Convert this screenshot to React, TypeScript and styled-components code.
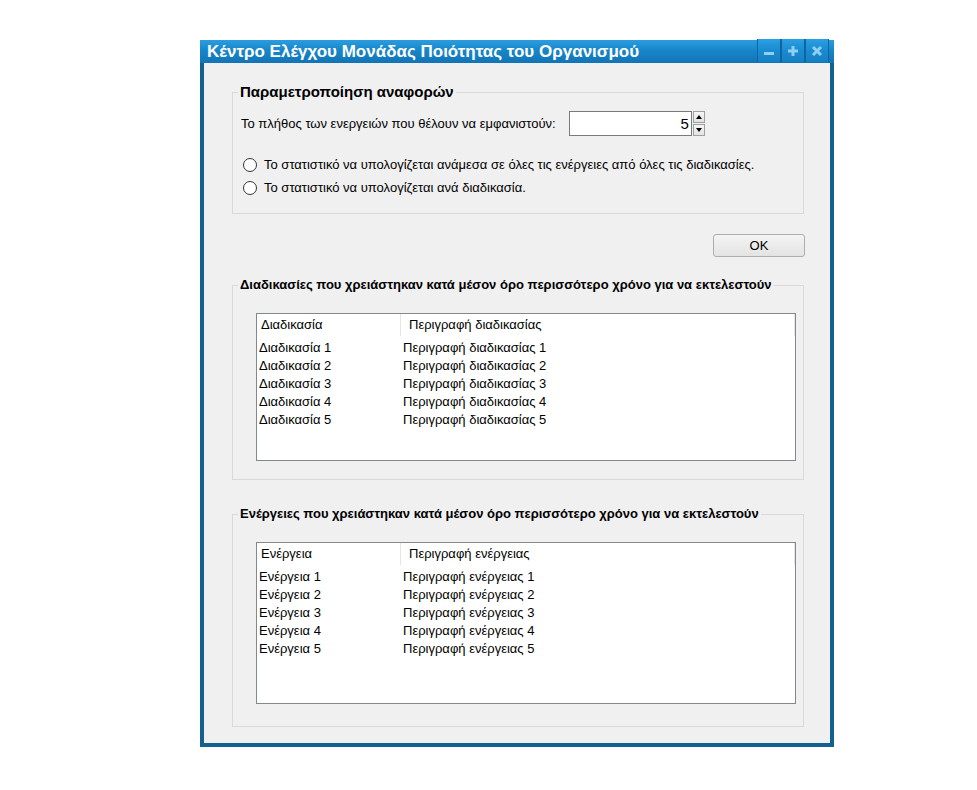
import React from "react";
import styled, { createGlobalStyle } from "styled-components";

const GlobalStyle = createGlobalStyle`
  html, body { margin: 0; padding: 0; background: #ffffff; }
  body { font-family: "Liberation Sans", Arial, sans-serif; font-size: 13px; color: #000; }
  * { box-sizing: border-box; }
`;

const Page = styled.div`
  padding: 40px 0 0 200px;
`;

const Window = styled.div`
  width: 634px;
  display: flex;
  flex-direction: column;
`;

const TitleBar = styled.div`
  height: 23px;
  display: flex;
  align-items: flex-start;
  padding-left: 7px;
  background: linear-gradient(#2a9de0 0%, #1786c9 45%, #1274b6 100%);
`;

const TitleText = styled.div`
  font-family: "Liberation Sans", Arial, sans-serif;
  font-weight: bold;
  font-size: 17px;
  line-height: 23px;
  color: #ffffff;
  flex: 1;
  white-space: nowrap;
`;

const WinButtons = styled.div`
  display: flex;
  gap: 2px;
  margin-right: 6px;
  margin-top: -1px;
`;

const WinButton = styled.div`
  width: 22px;
  height: 23px;
  display: flex;
  align-items: center;
  justify-content: center;
  background: linear-gradient(#2ba0e2 0%, #1a8bd0 50%, #1580c3 100%);
  box-shadow: -1px 0 0 #0f65a0, 1px 0 0 #0f65a0;
`;

const Client = styled.div`
  background: #f0f0f0;
  border: 4px solid #13618f;
  border-top: none;
  padding: 20px 26px 16px 28px;
  display: flex;
  flex-direction: column;
`;

const Group = styled.fieldset<{ $mt?: number; $pt: number; $pb: number }>`
  margin: ${(p) => p.$mt ?? 0}px 0 0 0;
  padding: ${(p) => p.$pt}px 7px ${(p) => p.$pb}px 8px;
  border: 1px solid #d9d9d9;
  min-width: 0;
`;

const Legend = styled.legend<{ $size: number }>`
  margin-left: -3px;
  padding: 0 2px;
  font-family: "Liberation Sans", Arial, sans-serif;
  font-weight: bold;
  font-size: ${(p) => p.$size}px;
  line-height: 18px;
  color: #000;
`;

const SpinRow = styled.div`
  display: flex;
  align-items: center;
  height: 25px;
  gap: 13px;
`;

const Label = styled.span`
  font-size: 13px;
  white-space: nowrap;
`;

const Spin = styled.div`
  display: flex;
  height: 25px;
  margin-left: auto;
  margin-right: 98px;
`;

const SpinInput = styled.div`
  width: 123px;
  height: 25px;
  background: #fff;
  border: 1px solid #7a7a7a;
  font-size: 15px;
  line-height: 23px;
  text-align: right;
  padding-right: 2px;
`;

const SpinButtons = styled.div`
  display: flex;
  flex-direction: column;
  gap: 1px;
  margin-left: 1px;
`;

const SpinBtn = styled.div`
  width: 12px;
  height: 12px;
  border: 1px solid #a0a0a0;
  background: linear-gradient(#f6f6f6, #e2e2e2);
  display: flex;
  align-items: center;
  justify-content: center;
`;

const RadioList = styled.div`
  margin-top: 17px;
  display: flex;
  flex-direction: column;
`;

const RadioRow = styled.label`
  display: flex;
  align-items: center;
  height: 23px;
  gap: 7px;
  padding-left: 2px;
  font-size: 13px;
  white-space: nowrap;
`;

const RadioDot = styled.span`
  width: 14px;
  height: 14px;
  border-radius: 50%;
  border: 1px solid #333;
  background: #fff;
  flex: none;
`;

const ButtonRow = styled.div`
  display: flex;
  justify-content: flex-end;
  margin: 20px -1px 0 0;
`;

const OkButton = styled.button`
  width: 92px;
  height: 23px;
  border: 1px solid #adadad;
  border-radius: 3px;
  background: linear-gradient(#f4f4f4, #e3e3e3);
  font-family: "Liberation Sans", Arial, sans-serif;
  font-size: 13px;
  color: #000;
  padding: 0;
`;

const ListBox = styled.div<{ $h: number }>`
  margin-left: 15px;
  height: ${(p) => p.$h}px;
  background: #fff;
  border: 1px solid #828790;
  display: grid;
  grid-template-columns: 144px 1fr;
  grid-auto-rows: 18px;
  grid-template-rows: 22px 3px;
  align-content: start;
`;

const HeadCell = styled.div<{ $first?: boolean }>`
  height: 22px;
  line-height: 22px;
  font-size: 13px;
  padding-left: ${(p) => (p.$first ? 4 : 8)}px;
  border-right: 1px solid #e5e5e5;
  white-space: nowrap;
`;

const Spacer = styled.div`
  grid-column: 1 / -1;
`;

const Cell = styled.div`
  font-size: 13px;
  line-height: 18px;
  padding-left: 2px;
  white-space: nowrap;
`;

const MinusIcon = () => (
  <svg width="12" height="12" viewBox="0 0 12 12">
    <rect x="1" y="7" width="10" height="3" fill="#8fd0f2" />
  </svg>
);
const PlusIcon = () => (
  <svg width="12" height="12" viewBox="0 0 12 12">
    <rect x="1" y="4.5" width="10" height="3" fill="#8fd0f2" />
    <rect x="4.5" y="1" width="3" height="10" fill="#8fd0f2" />
  </svg>
);
const CloseIcon = () => (
  <svg width="12" height="12" viewBox="0 0 12 12">
    <path d="M2 2 L10 10 M10 2 L2 10" stroke="#8fd0f2" strokeWidth="3" />
  </svg>
);

const ArrowUp = () => (
  <svg width="6" height="4" viewBox="0 0 6 4">
    <path d="M0 4 L3 0 L6 4 Z" fill="#000" />
  </svg>
);
const ArrowDown = () => (
  <svg width="6" height="4" viewBox="0 0 6 4">
    <path d="M0 0 L3 4 L6 0 Z" fill="#000" />
  </svg>
);

const processes = [1, 2, 3, 4, 5];

export default function App() {
  return (
    <>
      <GlobalStyle />
      <Page>
        <Window>
          <TitleBar>
            <TitleText>Κέντρο Ελέγχου Μονάδας Ποιότητας του Οργανισμού</TitleText>
            <WinButtons>
              <WinButton><MinusIcon /></WinButton>
              <WinButton><PlusIcon /></WinButton>
              <WinButton><CloseIcon /></WinButton>
            </WinButtons>
          </TitleBar>
          <Client>
            <Group $pt={10} $pb={14}>
              <Legend $size={15}>Παραμετροποίηση αναφορών</Legend>
              <SpinRow>
                <Label>Το πλήθος των ενεργειών που θέλουν να εμφανιστούν:</Label>
                <Spin>
                  <SpinInput>5</SpinInput>
                  <SpinButtons>
                    <SpinBtn><ArrowUp /></SpinBtn>
                    <SpinBtn><ArrowDown /></SpinBtn>
                  </SpinButtons>
                </Spin>
              </SpinRow>
              <RadioList>
                <RadioRow>
                  <RadioDot />
                  Το στατιστικό να υπολογίζεται ανάμεσα σε όλες τις ενέργειες από όλες τις διαδικασίες.
                </RadioRow>
                <RadioRow>
                  <RadioDot />
                  Το στατιστικό να υπολογίζεται ανά διαδικασία.
                </RadioRow>
              </RadioList>
            </Group>
            <ButtonRow>
              <OkButton>OK</OkButton>
            </ButtonRow>
            <Group $mt={19} $pt={19} $pb={18}>
              <Legend $size={13}>
                Διαδικασίες που χρειάστηκαν κατά μέσον όρο περισσότερο χρόνο για να εκτελεστούν
              </Legend>
              <ListBox $h={148}>
                <HeadCell $first>Διαδικασία</HeadCell>
                <HeadCell>Περιγραφή διαδικασίας</HeadCell>
                <Spacer />
                {processes.map((n) => (
                  <React.Fragment key={n}>
                    <Cell>Διαδικασία {n}</Cell>
                    <Cell>Περιγραφή διαδικασίας {n}</Cell>
                  </React.Fragment>
                ))}
              </ListBox>
            </Group>
            <Group $mt={25} $pt={19} $pb={22}>
              <Legend $size={13}>
                Ενέργειες που χρειάστηκαν κατά μέσον όρο περισσότερο χρόνο για να εκτελεστούν
              </Legend>
              <ListBox $h={162}>
                <HeadCell $first>Ενέργεια</HeadCell>
                <HeadCell>Περιγραφή ενέργειας</HeadCell>
                <Spacer />
                {processes.map((n) => (
                  <React.Fragment key={n}>
                    <Cell>Ενέργεια {n}</Cell>
                    <Cell>Περιγραφή ενέργειας {n}</Cell>
                  </React.Fragment>
                ))}
              </ListBox>
            </Group>
          </Client>
        </Window>
      </Page>
    </>
  );
}
